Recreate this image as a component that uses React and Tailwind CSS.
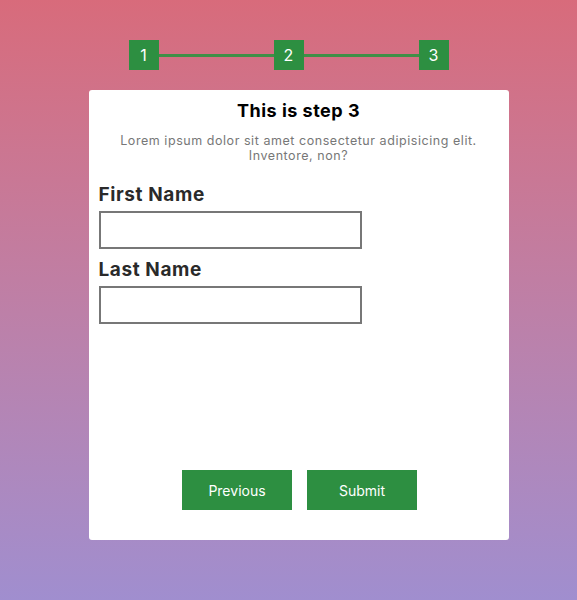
export default function App() {
  const font = { fontFamily: "Inter, 'Noto Sans', sans-serif" };
  return (
    <div
      className="w-[577px] h-[600px] bg-gradient-to-b from-[#d86b7b] to-[#a08ecf] flex flex-col items-center"
      style={font}
    >
      <div className="mt-[40px] flex items-center">
        <div className="w-[30px] h-[30px] bg-[#2d8f41] text-white flex items-center justify-center text-[16px]">1</div>
        <div className="w-[115px] h-[3px] bg-[#3f8f47]"></div>
        <div className="w-[30px] h-[30px] bg-[#2d8f41] text-white flex items-center justify-center text-[16px]">2</div>
        <div className="w-[115px] h-[3px] bg-[#3f8f47]"></div>
        <div className="w-[30px] h-[30px] bg-[#2d8f41] text-white flex items-center justify-center text-[16px]">3</div>
      </div>
      <div className="mt-[20px] ml-[20px] w-[420px] h-[450px] bg-white rounded-[3px] flex flex-col px-[10px] pt-[8px] pb-[30px]">
        <h2 className="text-center text-[18px] font-bold text-black leading-[26px] tracking-[0.5px]">This is step 3</h2>
        <p className="mt-[9px] text-center text-[12.5px] text-[#777] leading-[15px] px-[10px] tracking-[0.55px]">
          Lorem ipsum dolor sit amet consectetur adipisicing elit. Inventore, non?
        </p>
        <label className="mt-[20px] text-[19px] font-bold text-[#2a2a2a] leading-[24px] tracking-[0.6px]">First Name</label>
        <input className="mt-[4px] w-[263px] h-[38px] border-2 border-[#777] outline-none" />
        <label className="mt-[9px] text-[19px] font-bold text-[#2a2a2a] leading-[24px] tracking-[0.6px]">Last Name</label>
        <input className="mt-[4px] w-[263px] h-[38px] border-2 border-[#777] outline-none" />
        <div className="mt-auto ml-[2px] flex justify-center gap-[15px]">
          <button className="w-[110px] h-[40px] bg-[#2d8f41] text-white text-[14px]">Previous</button>
          <button className="w-[110px] h-[40px] bg-[#2d8f41] text-white text-[14px]">Submit</button>
        </div>
      </div>
    </div>
  );
}
